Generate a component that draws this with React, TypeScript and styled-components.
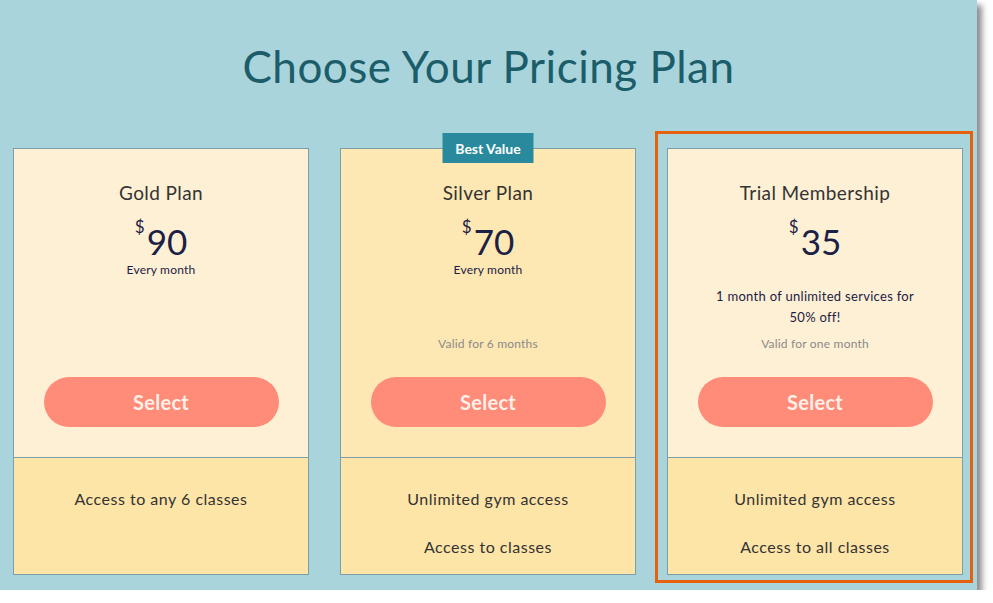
import React from "react";
import styled, { createGlobalStyle } from "styled-components";

interface Plan {
  name: string;
  price: string;
  period?: string;
  description?: string;
  valid?: string;
  features: string[];
  badge?: string;
  highlighted?: boolean;
  marked?: boolean;
}

const plans: Plan[] = [
  {
    name: "Gold Plan",
    price: "90",
    period: "Every month",
    features: ["Access to any 6 classes"],
  },
  {
    name: "Silver Plan",
    price: "70",
    period: "Every month",
    valid: "Valid for 6 months",
    features: ["Unlimited gym access", "Access to classes"],
    badge: "Best Value",
    highlighted: true,
  },
  {
    name: "Trial Membership",
    price: "35",
    description: "1 month of unlimited services for 50% off!",
    valid: "Valid for one month",
    features: ["Unlimited gym access", "Access to all classes"],
    marked: true,
  },
];

const App: React.FC = () => {
  return (
    <>
      <GlobalStyle />
      <Panel>
        <Title>Choose Your Pricing Plan</Title>
        <CardRow>
          {plans.map((plan) => (
            <CardSlot key={plan.name}>
              {plan.marked && <Marker />}
              <Card>
                {plan.badge && <Badge>{plan.badge}</Badge>}
                <CardTop $highlighted={plan.highlighted}>
                  <PlanName>{plan.name}</PlanName>
                  <PriceRow>
                    <Currency>$</Currency>
                    <Amount>{plan.price}</Amount>
                  </PriceRow>
                  {plan.period && <Period>{plan.period}</Period>}
                  {plan.description && <Description>{plan.description}</Description>}
                  <Spacer />
                  {plan.valid && <Valid>{plan.valid}</Valid>}
                  <SelectButton>Select</SelectButton>
                </CardTop>
                <CardBottom>
                  {plan.features.map((f) => (
                    <Feature key={f}>{f}</Feature>
                  ))}
                </CardBottom>
              </Card>
            </CardSlot>
          ))}
        </CardRow>
      </Panel>
    </>
  );
};

const GlobalStyle = createGlobalStyle`
  html, body {
    margin: 0;
    padding: 0;
    background: #ffffff;
  }
  body {
    font-family: Lato, "Open Sans", sans-serif;
  }
`;

const Panel = styled.div`
  width: 977px;
  height: 590px;
  box-sizing: border-box;
  background: #a9d4dc;
  box-shadow: 5px 5px 6px rgba(0, 0, 0, 0.45);
  padding-top: 40px;
`;

const Title = styled.h1`
  margin: 0;
  text-align: center;
  font-family: Lato, sans-serif;
  font-weight: 400;
  font-size: 44px;
  line-height: 52px;
  letter-spacing: 0.5px;
  color: #1c5d6a;
`;

const CardRow = styled.div`
  display: grid;
  grid-template-columns: repeat(3, 296px);
  column-gap: 31px;
  padding-left: 13px;
  margin-top: 56px;
`;

const CardSlot = styled.div`
  position: relative;
`;

const Marker = styled.div`
  position: absolute;
  top: -17px;
  left: -12px;
  right: -10px;
  bottom: -8px;
  border: 3px solid #e6600e;
  pointer-events: none;
`;

const Card = styled.div`
  position: relative;
  border: 1px solid #7b9ea8;
  display: flex;
  flex-direction: column;
  height: 427px;
  box-sizing: border-box;
`;

const Badge = styled.div`
  position: absolute;
  top: -16px;
  left: 50%;
  transform: translateX(-50%);
  width: 91px;
  height: 30px;
  display: flex;
  align-items: center;
  justify-content: center;
  background: #2a8a9d;
  color: #ffffff;
  font-size: 14px;
  font-weight: 700;
`;

const CardTop = styled.div<{ $highlighted?: boolean }>`
  height: 309px;
  box-sizing: border-box;
  display: flex;
  flex-direction: column;
  align-items: center;
  padding: 33px 30px 30px;
  background: ${(p) => (p.$highlighted ? "#fde7b2" : "#fef0d4")};
  border-bottom: 1px solid #7b9ea8;
`;

const PlanName = styled.div`
  font-size: 19px;
  line-height: 22px;
  letter-spacing: 0.4px;
  color: #333333;
`;

const PriceRow = styled.div`
  display: flex;
  align-items: flex-start;
  margin-top: 12px;
  color: #1b2145;
`;

const Currency = styled.span`
  font-size: 17px;
  line-height: 20px;
  margin-top: 1px;
  margin-right: 2px;
`;

const Amount = styled.span`
  font-size: 35px;
  line-height: 38px;
  margin-top: 6px;
`;

const Period = styled.div`
  font-size: 12px;
  line-height: 16px;
  letter-spacing: 0.2px;
  color: #1b2145;
  margin-top: 2px;
`;

const Description = styled.div`
  font-size: 13px;
  line-height: 21px;
  letter-spacing: 0.3px;
  color: #1b2145;
  text-align: center;
  max-width: 220px;
  margin-top: 26px;
`;

const Spacer = styled.div`
  flex: 1;
`;

const Valid = styled.div`
  font-size: 12px;
  line-height: 16px;
  letter-spacing: 0.2px;
  color: #8a8a8a;
  margin-bottom: 25px;
`;

const SelectButton = styled.button`
  width: 235px;
  height: 50px;
  flex-shrink: 0;
  border: none;
  border-radius: 25px;
  background: #ff8b79;
  color: #fdf0e8;
  font-family: Lato, sans-serif;
  font-size: 20px;
  font-weight: 700;
  letter-spacing: 0.3px;
  cursor: pointer;
`;

const CardBottom = styled.div`
  flex: 1;
  background: #fde4a7;
  display: flex;
  flex-direction: column;
  align-items: center;
  gap: 28px;
  padding-top: 31px;
`;

const Feature = styled.div`
  font-size: 16px;
  line-height: 20px;
  letter-spacing: 0.5px;
  color: #333333;
`;

export default App;
